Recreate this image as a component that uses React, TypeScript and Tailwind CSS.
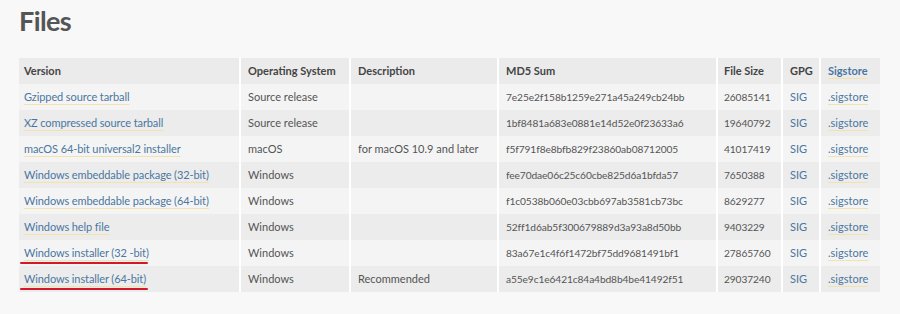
import React from "react";

type Row = {
  v: string;
  os: string;
  desc: string;
  md5: string;
  size: string;
  mark?: boolean;
};

const rows: Row[] = [
  { v: "Gzipped source tarball", os: "Source release", desc: "", md5: "7e25e2f158b1259e271a45a249cb24bb", size: "26085141" },
  { v: "XZ compressed source tarball", os: "Source release", desc: "", md5: "1bf8481a683e0881e14d52e0f23633a6", size: "19640792" },
  { v: "macOS 64-bit universal2 installer", os: "macOS", desc: "for macOS 10.9 and later", md5: "f5f791f8e8bfb829f23860ab08712005", size: "41017419" },
  { v: "Windows embeddable package (32-bit)", os: "Windows", desc: "", md5: "fee70dae06c25c60cbe825d6a1bfda57", size: "7650388" },
  { v: "Windows embeddable package (64-bit)", os: "Windows", desc: "", md5: "f1c0538b060e03cbb697ab3581cb73bc", size: "8629277" },
  { v: "Windows help file", os: "Windows", desc: "", md5: "52ff1d6ab5f300679889d3a93a8d50bb", size: "9403229" },
  { v: "Windows installer (32 -bit)", os: "Windows", desc: "", md5: "83a67e1c4f6f1472bf75dd9681491bf1", size: "27865760", mark: true },
  { v: "Windows installer (64-bit)", os: "Windows", desc: "Recommended", md5: "a55e9c1e6421c84a4bd8b4be41492f51", size: "29037240", mark: true },
];

const link = "text-[#4a76a0] underline decoration-[#f3e2ad] decoration-1 underline-offset-[3px]";

export default function App() {
  return (
    <div
      className="w-[900px] h-[314px] bg-[#f8f8f8] text-[#555] overflow-hidden"
      style={{ fontFamily: "Lato, 'Open Sans', sans-serif" }}
    >
      <div className="pl-[19px] pt-[4px]">
        <h1 className="text-[27px] font-bold leading-[34px] text-[#555] tracking-[-0.6px]">Files</h1>
        <table className="mt-[20px] w-[861px] border-collapse text-[11px] leading-[26px]">
          <colgroup>
            <col className="w-[221px]" />
            <col className="w-[110px]" />
            <col className="w-[148px]" />
            <col className="w-[219px]" />
            <col className="w-[65px]" />
            <col className="w-[38px]" />
            <col className="w-[60px]" />
          </colgroup>
          <thead>
            <tr className="bg-[#ebebeb] h-[26px] text-[#444]">
              <th className="text-left font-bold pl-[5px] border-r-2 border-white">Version</th>
              <th className="text-left font-bold pl-[7px] border-r-2 border-white">Operating System</th>
              <th className="text-left font-bold pl-[7px] border-r-2 border-white">Description</th>
              <th className="text-left font-bold pl-[7px] border-r-2 border-white">MD5 Sum</th>
              <th className="text-left font-bold pl-[6px] border-r-2 border-white">File Size</th>
              <th className="text-left font-bold pl-[7px] border-r-2 border-white">GPG</th>
              <th className="text-left font-bold pl-[7px]">
                <span className={link}>Sigstore</span>
              </th>
            </tr>
          </thead>
          <tbody>
            {rows.map((r, i) => (
              <tr key={i} className={`h-[26px] ${i % 2 === 0 ? "bg-[#f4f4f4]" : "bg-[#ececec]"}`}>
                <td className="pl-[5px] border-r-2 border-white whitespace-nowrap tracking-[-0.1px]">
                  <span className="relative">
                    <span className={link}>{r.v}</span>
                    {r.mark && (
                      <span className="absolute left-[-4px] w-[128px] bottom-[-5px] h-[2px] rounded-full bg-[#d3182c]" />
                    )}
                  </span>
                </td>
                <td className="pl-[7px] border-r-2 border-white whitespace-nowrap">{r.os}</td>
                <td className="pl-[7px] border-r-2 border-white whitespace-nowrap">{r.desc}</td>
                <td className="pl-[7px] border-r-2 border-white whitespace-nowrap text-[10.2px] tracking-[-0.1px]">{r.md5}</td>
                <td className="pl-[6px] border-r-2 border-white text-[10.2px] tracking-[-0.1px]">{r.size}</td>
                <td className="pl-[7px] border-r-2 border-white">
                  <span className="text-[#4a76a0]">SIG</span>
                </td>
                <td className="pl-[7px]">
                  <span className={link}>.sigstore</span>
                </td>
              </tr>
            ))}
          </tbody>
        </table>
      </div>
    </div>
  );
}
